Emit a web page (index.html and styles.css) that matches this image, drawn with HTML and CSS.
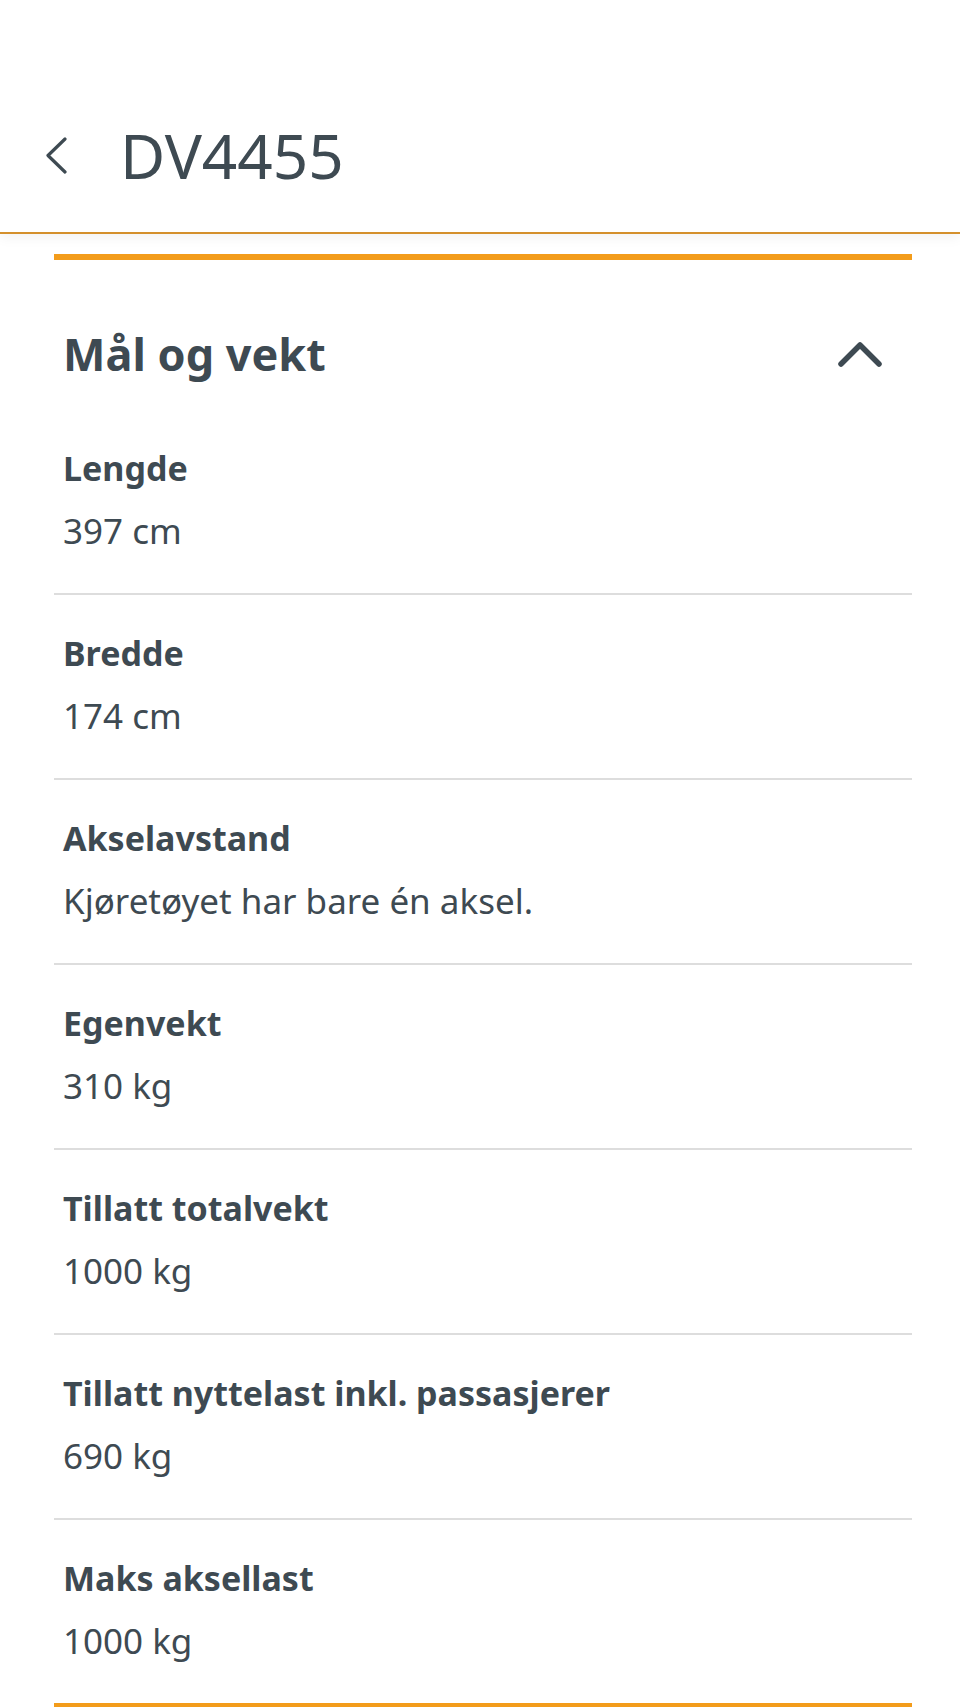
FILE: index.html
```html
<!DOCTYPE html>
<html lang="no">
<head>
    <meta charset="UTF-8">
    <meta name="viewport" content="width=device-width, initial-scale=1.0">
    <title>DV4455</title>
    <link rel="stylesheet" href="styles.css">
</head>
<body>
    <header class="topbar">
        <button class="back-button" aria-label="Tilbake">
            <svg width="23" height="37" viewBox="0 0 23 37">
                <polyline points="20,2 3,18.5 20,35" fill="none" stroke="#3e4a52" stroke-width="3.2" stroke-linecap="round" stroke-linejoin="round"/>
            </svg>
        </button>
        <h1 class="title">DV4455</h1>
    </header>

    <main class="content">
        <section class="card">
            <div class="card-header">
                <h2>Mål og vekt</h2>
                <svg class="chevron" width="44" height="26" viewBox="0 0 44 26">
                    <polyline points="3,23 22,4 41,23" fill="none" stroke="#3e4a52" stroke-width="5.5" stroke-linecap="round" stroke-linejoin="round"/>
                </svg>
            </div>

            <div class="row">
                <div class="label">Lengde</div>
                <div class="value">397 cm</div>
            </div>
            <div class="row">
                <div class="label">Bredde</div>
                <div class="value">174 cm</div>
            </div>
            <div class="row">
                <div class="label">Akselavstand</div>
                <div class="value">Kjøretøyet har bare én aksel.</div>
            </div>
            <div class="row">
                <div class="label">Egenvekt</div>
                <div class="value">310 kg</div>
            </div>
            <div class="row">
                <div class="label">Tillatt totalvekt</div>
                <div class="value">1000 kg</div>
            </div>
            <div class="row">
                <div class="label">Tillatt nyttelast inkl. passasjerer</div>
                <div class="value">690 kg</div>
            </div>
            <div class="row">
                <div class="label">Maks aksellast</div>
                <div class="value">1000 kg</div>
            </div>
        </section>

        <!-- next section starts just below the fold -->
        <section class="card card-next"></section>
    </main>
</body>
</html>
```

FILE: styles.css
```css
body {
    margin: 0;
    padding: 0;
    font-family: 'Noto Sans', 'Open Sans', sans-serif;
    background-color: #fff;
    color: #3e4a52;
}

.topbar {
    box-sizing: border-box;
    height: 234px;
    padding: 78px 0 0 45px;
    display: flex;
    align-items: center;
    border-bottom: 2px solid #d4902c;
    box-shadow: 0 4px 12px rgba(0,0,0,0.05);
    background-color: #fff;
}

.back-button {
    background: none;
    border: none;
    padding: 0;
    display: flex;
    cursor: pointer;
}

.title {
    margin: 0 0 0 52px;
    font-size: 62px;
    font-weight: 400;
    line-height: 80px;
}

.content {
    padding: 20px 48px 0 54px;
}

.card {
    border-top: 6px solid #f39c1b;
}

.card-next {
    height: 40px;
}

.card-header {
    display: flex;
    justify-content: space-between;
    align-items: center;
    padding: 64px 30px 26px 9px;
}

.card-header h2 {
    margin: 0;
    font-size: 45px;
    font-weight: 700;
    line-height: 60px;
}

.row {
    padding: 38px 9px;
    border-bottom: 2px solid #dddddd;
}

.row:last-child {
    border-bottom: none;
}

.label {
    font-size: 34px;
    font-weight: 700;
    line-height: 40px;
    margin-bottom: 19px;
}

.value {
    font-size: 35px;
    line-height: 48px;
}
```
